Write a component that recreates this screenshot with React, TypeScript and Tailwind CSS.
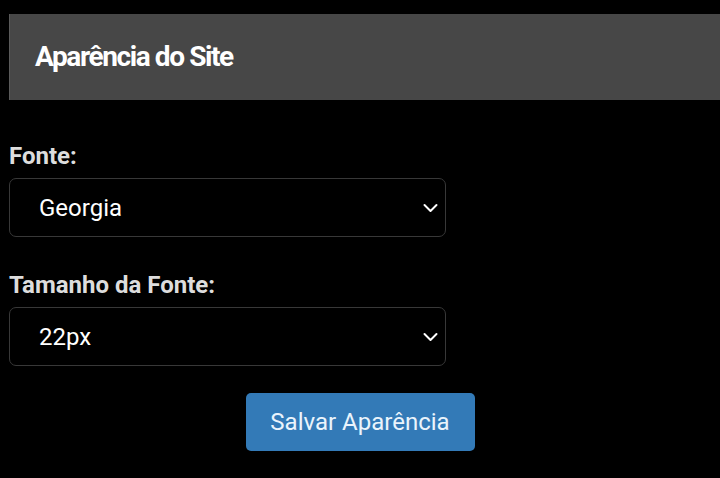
import { ChangeEvent, useState } from 'react';

interface FieldProps {
  label: string;
  value: string;
  options: string[];
  onChange: (v: string) => void;
}

function SelectField({ label, value, options, onChange }: FieldProps) {
  return (
    <div className="flex flex-col">
      <label className="text-[24px] leading-[24px] font-bold text-[#dddddd] mb-[10px]">{label}</label>
      <div className="relative w-[437px]">
        <select
          value={value}
          onChange={(e: ChangeEvent<HTMLSelectElement>) => onChange(e.target.value)}
          className="appearance-none w-full h-[59px] bg-black text-white text-[24px] pl-[29px] pr-10 border border-[#383838] rounded-[7px] outline-none"
        >
          {options.map((o) => (
            <option key={o} value={o}>
              {o}
            </option>
          ))}
        </select>
        <svg
          className="pointer-events-none absolute right-[8px] top-1/2 -translate-y-1/2"
          width="15"
          height="9"
          viewBox="0 0 15 9"
          fill="none"
          stroke="white"
          strokeWidth="2"
          strokeLinecap="round"
          strokeLinejoin="round"
        >
          <path d="M1.5 1.5 7.5 7.5 13.5 1.5" />
        </svg>
      </div>
    </div>
  );
}

export default function App() {
  const [font, setFont] = useState('Georgia');
  const [size, setSize] = useState('22px');

  return (
    <div className="min-h-[478px] bg-black pt-[14px] pl-[9px] overflow-hidden" style={{ fontFamily: 'Roboto, "Noto Sans", sans-serif' }}>
      <div className="h-[86px] bg-[#474747] border-l border-[#5a5a5a] flex items-center pl-[25px]">
        <h2 className="text-[28px] font-bold text-white tracking-[-1.4px]">Aparência do Site</h2>
      </div>

      <div className="mt-[44px] flex flex-col gap-[36px]">
        <SelectField
          label="Fonte:"
          value={font}
          options={['Arial', 'Georgia', 'Verdana', 'Times New Roman']}
          onChange={setFont}
        />
        <SelectField
          label="Tamanho da Fonte:"
          value={size}
          options={['16px', '18px', '20px', '22px', '24px']}
          onChange={setSize}
        />
      </div>

      <div className="flex justify-center pr-[9px] mt-[27px]">
        <button className="w-[229px] h-[58px] bg-[#337ab7] text-[#eaf4fc] text-[24px] rounded-[5px]">
          Salvar Aparência
        </button>
      </div>
    </div>
  );
}
